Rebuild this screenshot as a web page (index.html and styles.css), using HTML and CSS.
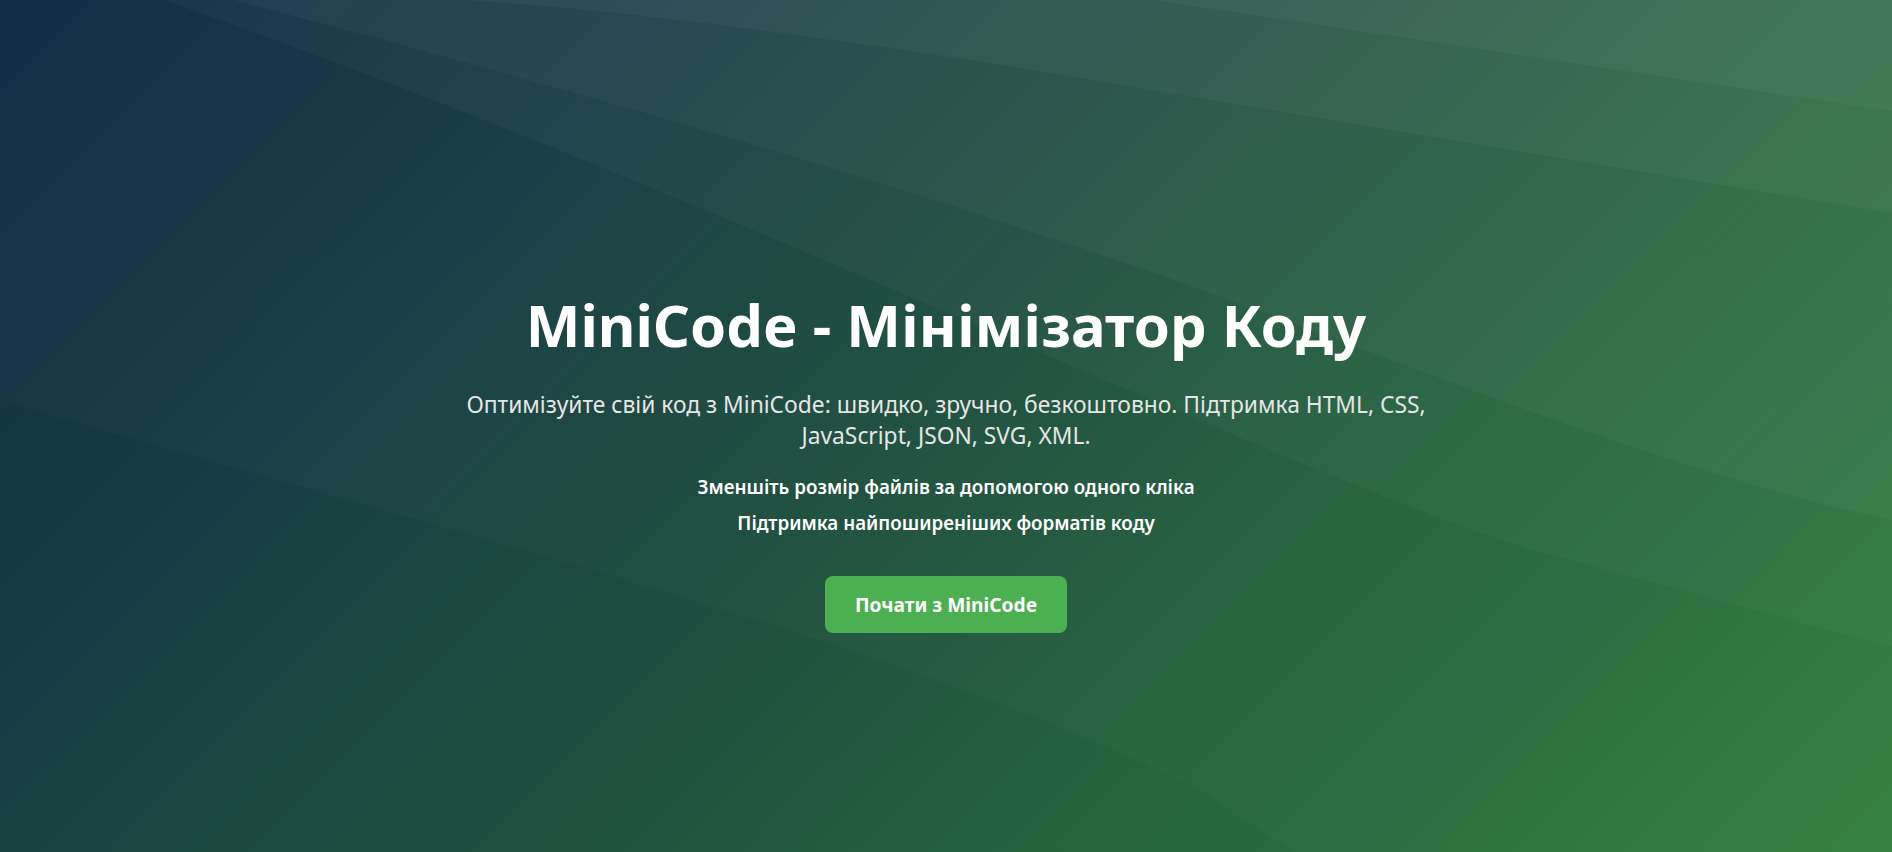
FILE: index.html
```html
<!DOCTYPE html>
<html lang="uk">
<head>
<meta charset="utf-8">
<title>MiniCode - Мінімізатор Коду</title>
<link rel="stylesheet" href="styles.css">
</head>
<body>
<section class="hero">
  <svg class="hero-bg" viewBox="0 0 1892 852" preserveAspectRatio="none" aria-hidden="true">
    <path d="M0 400 C 400 520, 900 640, 1200 790 L1293 852 L1892 852 L1892 0 L0 0 Z" fill="#fff" fill-opacity="0.018"/>
    <path d="M163 0 C 700 187, 1300 480, 1533 550 L1892 647 L1892 0 Z" fill="#fff" fill-opacity="0.028"/>
    <path d="M233 0 C 500 70, 900 180, 1230 300 C 1500 400, 1700 480, 1892 520 L1892 0 Z" fill="#fff" fill-opacity="0.03"/>
    <path d="M457 0 C 600 6, 900 45, 1200 98 L1892 213 L1892 0 Z" fill="#fff" fill-opacity="0.035"/>
    <path d="M1153 0 L1892 111 L1892 0 Z" fill="#fff" fill-opacity="0.035"/>
  </svg>
  <div class="hero-content">
    <h1 class="hero-title">MiniCode - Мінімізатор Коду</h1>
    <p class="hero-lead">Оптимізуйте свій код з MiniCode: швидко, зручно, безкоштовно. Підтримка HTML, CSS, JavaScript, JSON, SVG, XML.</p>
    <ul class="hero-features">
      <li>Зменшіть розмір файлів за допомогою одного кліка</li>
      <li>Підтримка найпоширеніших форматів коду</li>
    </ul>
    <a class="hero-btn" href="#">Почати з MiniCode</a>
  </div>
</section>
</body>
</html>
```

FILE: styles.css
```css
* { box-sizing: border-box; }
html, body { margin: 0; padding: 0; }
body {
  font-family: "Noto Sans", "Open Sans", "DejaVu Sans", sans-serif;
  color: #fff;
}
.hero {
  position: relative;
  height: 852px;
  overflow: hidden;
  background: linear-gradient(135deg, #0d2946 0%, #1f503f 50%, #2f803c 100%);
}
.hero-bg {
  position: absolute;
  inset: 0;
  width: 100%;
  height: 100%;
}
.hero-content {
  position: relative;
  display: flex;
  flex-direction: column;
  align-items: center;
  text-align: center;
  padding-top: 290px;
}
.hero-title {
  margin: 0;
  font-size: 58px;
  line-height: 1.2;
  font-weight: 700;
}
.hero-lead {
  margin: 29px 0 0;
  max-width: 1000px;
  font-size: 22.8px;
  line-height: 1.38;
  color: #e6e6e6;
}
.hero-features {
  list-style: none;
  margin: 21px 0 0;
  padding: 0;
  display: flex;
  flex-direction: column;
  gap: 8px;
  font-size: 18.8px;
  line-height: 1.5;
  font-weight: 600;
}
.hero-btn {
  margin-top: 39px;
  display: inline-block;
  padding: 15px 30px;
  background: #4caf50;
  color: #fff;
  text-decoration: none;
  font-size: 19.2px;
  line-height: 27px;
  font-weight: 700;
  border-radius: 8px;
}
```
